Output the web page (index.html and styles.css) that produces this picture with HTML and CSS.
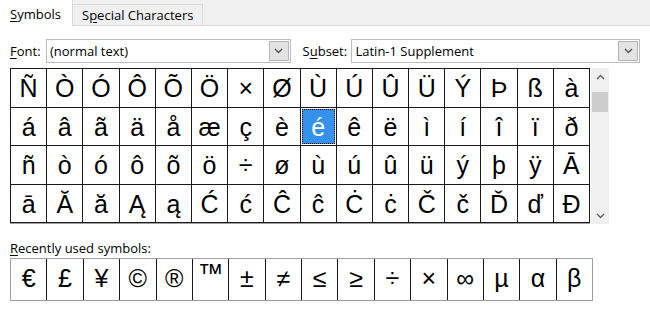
FILE: index.html
```html
<!DOCTYPE html>
<html>
<head>
<meta charset="utf-8">
<link rel="stylesheet" href="styles.css">
</head>
<body>
<div class="tabs">
  <div class="tab active"><span class="ul">S</span>ymbols</div>
  <div class="tab">S<span class="ul">p</span>ecial Characters</div>
  <div class="tabfill"></div>
</div>
<div class="main">
  <div class="pickers">
    <label class="lbl font-lbl"><span class="ul">F</span>ont:</label>
    <div class="combo font-combo"><span class="val">(normal text)</span><span class="btn"><svg width="9" height="6" viewBox="0 0 9 6"><polyline points="1,1 4.5,4.5 8,1" fill="none" stroke="#555" stroke-width="1.4"/></svg></span></div>
    <label class="lbl subset-lbl">S<span class="ul">u</span>bset:</label>
    <div class="combo subset-combo"><span class="val">Latin-1 Supplement</span><span class="btn"><svg width="9" height="6" viewBox="0 0 9 6"><polyline points="1,1 4.5,4.5 8,1" fill="none" stroke="#555" stroke-width="1.4"/></svg></span></div>
  </div>
  <div class="charwrap">
    <div class="grid">
      <div class="c">Ñ</div><div class="c">Ò</div><div class="c">Ó</div><div class="c">Ô</div><div class="c">Õ</div><div class="c">Ö</div><div class="c">×</div><div class="c">Ø</div><div class="c">Ù</div><div class="c">Ú</div><div class="c">Û</div><div class="c">Ü</div><div class="c">Ý</div><div class="c">Þ</div><div class="c">ß</div><div class="c">à</div>
      <div class="c">á</div><div class="c">â</div><div class="c">ã</div><div class="c">ä</div><div class="c">å</div><div class="c">æ</div><div class="c">ç</div><div class="c">è</div><div class="c sel"><span>é</span></div><div class="c">ê</div><div class="c">ë</div><div class="c">ì</div><div class="c">í</div><div class="c">î</div><div class="c">ï</div><div class="c">ð</div>
      <div class="c">ñ</div><div class="c">ò</div><div class="c">ó</div><div class="c">ô</div><div class="c">õ</div><div class="c">ö</div><div class="c">÷</div><div class="c">ø</div><div class="c">ù</div><div class="c">ú</div><div class="c">û</div><div class="c">ü</div><div class="c">ý</div><div class="c">þ</div><div class="c">ÿ</div><div class="c">Ā</div>
      <div class="c">ā</div><div class="c">Ă</div><div class="c">ă</div><div class="c">Ą</div><div class="c">ą</div><div class="c">Ć</div><div class="c">ć</div><div class="c">Ĉ</div><div class="c">ĉ</div><div class="c">Ċ</div><div class="c">ċ</div><div class="c">Č</div><div class="c">č</div><div class="c">Ď</div><div class="c">ď</div><div class="c">Đ</div>
    </div>
    <div class="scroll">
      <div class="arrow"><svg width="9" height="6" viewBox="0 0 9 6"><polyline points="1,5 4.5,1.5 8,5" fill="none" stroke="#606060" stroke-width="1.3"/></svg></div>
      <div class="track"><div class="thumb"></div></div>
      <div class="arrow"><svg width="9" height="6" viewBox="0 0 9 6"><polyline points="1,1 4.5,4.5 8,1" fill="none" stroke="#606060" stroke-width="1.3"/></svg></div>
    </div>
  </div>
  <div class="recent-lbl"><span class="ul">R</span>ecently used symbols:</div>
  <div class="recent">
    <div class="r">€</div><div class="r">£</div><div class="r">¥</div><div class="r">©</div><div class="r">®</div><div class="r tm">™</div><div class="r">±</div><div class="r">≠</div><div class="r">≤</div><div class="r">≥</div><div class="r">÷</div><div class="r">×</div><div class="r">∞</div><div class="r">µ</div><div class="r">α</div><div class="r">β</div>
  </div>
</div>
</body>
</html>
```
FILE: styles.css
```css
html, body {
  margin: 0;
  padding: 0;
}
body {
  width: 650px;
  height: 311px;
  overflow: hidden;
  background: #ffffff;
  font-family: "Open Sans", "Noto Sans", sans-serif;
  font-size: 13px;
  color: #000;
}
.ul {
  text-decoration: underline;
  text-underline-offset: 2px;
}
.tabs {
  display: flex;
  align-items: flex-end;
  height: 26px;
  background: #f0f0f0;
}
.tab {
  box-sizing: border-box;
  height: 22px;
  width: 130px;
  padding-left: 9px;
  line-height: 20px;
  background: #f0f0f0;
  border-top: 1px solid #d9d9d9;
  border-right: 1px solid #d9d9d9;
  border-bottom: 1px solid #d9d9d9;
}
.tab.active {
  height: 26px;
  width: 73px;
  padding-left: 10px;
  line-height: 28px;
  background: #ffffff;
  border-top: none;
  border-bottom: none;
}
.tabfill {
  flex: 1;
  height: 1px;
  background: #d9d9d9;
}
.main {
  padding: 0 10px;
}
.pickers {
  display: flex;
  align-items: center;
  margin-top: 13px;
  height: 24px;
}
.lbl {
  display: block;
  line-height: 24px;
}
.font-lbl {
  width: 36px;
}
.subset-lbl {
  width: 49px;
  margin-left: 12px;
}
.combo {
  box-sizing: border-box;
  height: 24px;
  display: flex;
  align-items: stretch;
  border: 1px solid #bcbcbc;
  background: #fff;
}
.font-combo {
  width: 245px;
}
.subset-combo {
  width: 289px;
}
.val {
  flex: 1;
  padding-left: 3px;
  line-height: 22px;
}
.btn {
  box-sizing: border-box;
  width: 20px;
  margin: 1px;
  background: #e3e3e3;
  border: 1px solid #b5b5b5;
  display: flex;
  align-items: center;
  justify-content: center;
}
.charwrap {
  display: flex;
  margin-top: 5px;
  height: 156px;
}
.grid {
  box-sizing: border-box;
  width: 580px;
  height: 156px;
  display: grid;
  grid-template-columns: repeat(16, 1fr);
  grid-template-rows: repeat(4, 1fr);
  gap: 1px;
  padding: 1px;
  background: #1a1a1a;
  border-bottom: 1px solid #a0a0a0;
}
.c {
  background: #fff;
  font-family: "Liberation Sans", Arial, sans-serif;
  font-size: 25px;
  display: flex;
  align-items: center;
  justify-content: center;
  padding-top: 2px;
  box-sizing: border-box;
}
.c.sel {
  padding: 1px;
}
.c.sel span {
  display: flex;
  align-items: center;
  justify-content: center;
  width: 100%;
  height: 100%;
  padding-top: 2px;
  box-sizing: border-box;
  background: #3592ec;
  color: #fff;
  outline: 1px dotted #000;
  outline-offset: -1px;
}
.scroll {
  width: 18px;
  display: flex;
  flex-direction: column;
  background: #f0f0f0;
  margin-left: 1px;
}
.arrow {
  height: 17px;
  display: flex;
  align-items: center;
  justify-content: center;
}
.track {
  flex: 1;
  padding: 7px 1px 0 1px;
}
.thumb {
  height: 20px;
  background: #cdcdcd;
}
.recent-lbl {
  margin-top: 15px;
  height: 18px;
  line-height: 18px;
}
.recent {
  box-sizing: border-box;
  margin-top: 1px;
  width: 583px;
  height: 43px;
  display: grid;
  grid-template-columns: repeat(16, 1fr);
  gap: 1px;
  background: #1a1a1a;
  border: 1px solid #a0a0a0;
}
.r {
  background: #fff;
  font-family: "Liberation Sans", Arial, sans-serif;
  font-size: 25px;
  display: flex;
  align-items: center;
  justify-content: center;
  padding-bottom: 2px;
}
.r.tm {
  align-items: flex-start;
  padding-top: 1px;
  font-size: 26px;
  line-height: 26px;
}
```
